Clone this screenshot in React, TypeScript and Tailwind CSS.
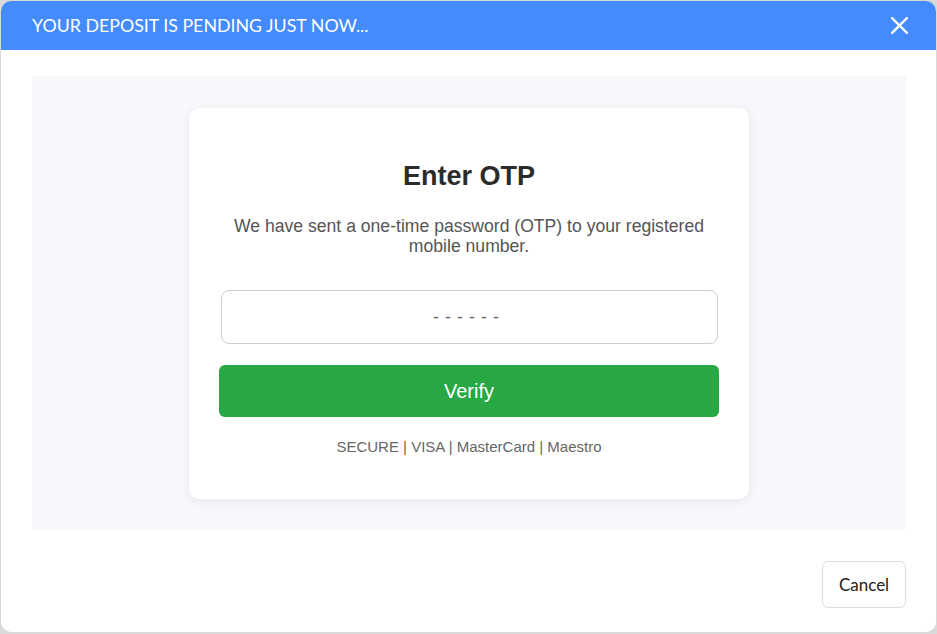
import React from "react";

export default function App() {
  return (
    <div className="w-[937px] h-[634px] bg-[#d9d9d9] px-px pt-px pb-[2px] overflow-hidden">
      <div className="w-full h-full bg-white rounded-[10px] overflow-hidden flex flex-col">
        <div className="h-[49px] bg-[#448bff] flex items-center justify-between pl-[31px] pr-[28px] shrink-0">
          <span className="text-white text-[17.8px] font-['Lato',sans-serif]">YOUR DEPOSIT IS PENDING JUST NOW...</span>
          <svg width="17" height="17" viewBox="0 0 17 17" className="text-white">
            <path d="M1 1L16 16M16 1L1 16" stroke="currentColor" strokeWidth="2.4" strokeLinecap="square" />
          </svg>
        </div>
        <div className="flex-1 flex flex-col pl-[31px] pr-[30px] pt-[26px]">
          <div className="h-[454px] bg-[#f7f8fc] flex justify-center pt-[32px]">
            <div className="w-[560px] h-[391px] bg-white rounded-[10px] shadow-[0_2px_10px_rgba(0,0,0,0.08)] flex flex-col items-center px-[30px] pt-[52px] font-['Liberation_Sans',Arial,sans-serif]">
              <h2 className="text-[27px] leading-[32px] font-bold text-[#2b2b2b]">Enter OTP</h2>
              <p className="mt-[24px] text-[17.6px] leading-[20px] text-[#555] text-center px-[14px]">
                We have sent a one-time password (OTP) to your registered mobile number.
              </p>
              <input
                className="mt-[34px] w-[497px] h-[54px] border border-[#cfcfcf] rounded-[8px] text-center text-[18px] tracking-[6px] placeholder:text-[#666] outline-none font-['Liberation_Sans',Arial,sans-serif]"
                placeholder="------"
              />
              <button className="mt-[21px] w-[500px] h-[52px] bg-[#28a745] rounded-[6px] text-white text-[20px]">Verify</button>
              <div className="mt-[22px] text-[15px] leading-[16px] text-[#666]">SECURE | VISA | MasterCard | Maestro</div>
            </div>
          </div>
          <div className="flex justify-end mt-[31px]">
            <button className="w-[84px] h-[47px] border border-[#dedede] rounded-[6px] bg-white text-[17px] text-[#222] font-['Lato',sans-serif]">Cancel</button>
          </div>
        </div>
      </div>
    </div>
  );
}
